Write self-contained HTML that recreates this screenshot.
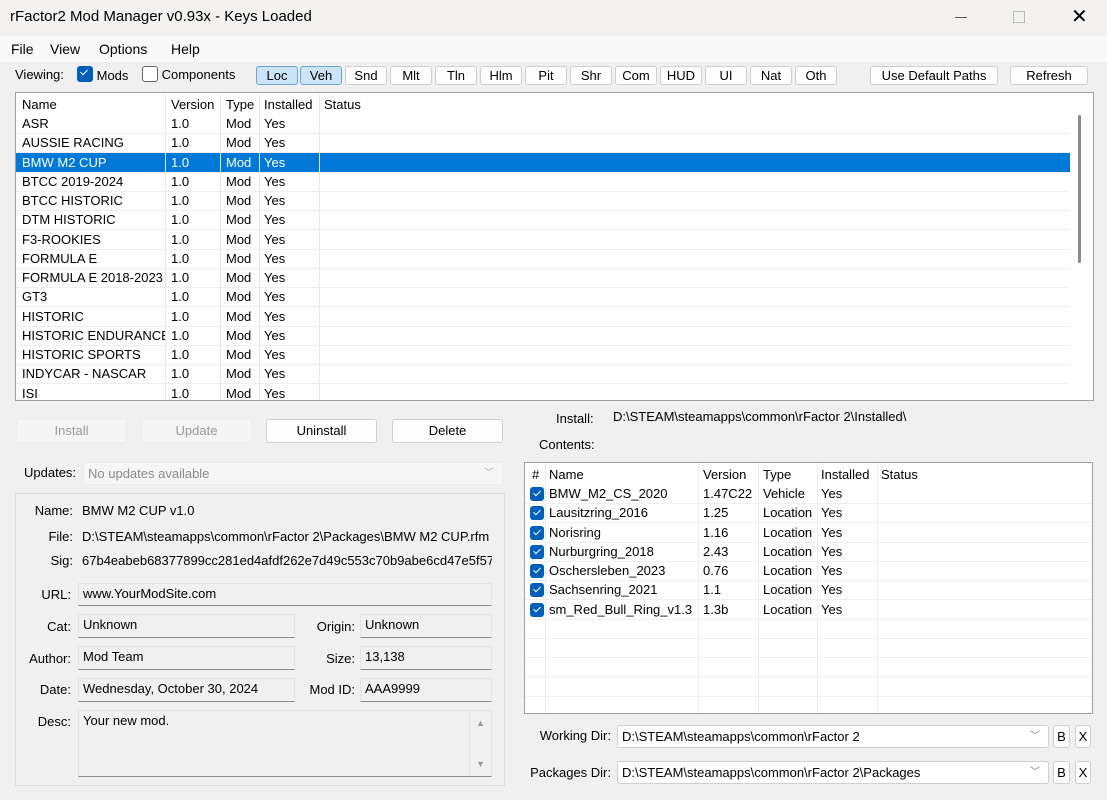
<!DOCTYPE html>
<html><head><meta charset="utf-8"><style>
*{box-sizing:border-box;margin:0;padding:0}
body{width:1107px;height:800px;overflow:hidden;background:#f0f0f0;font-family:"Liberation Sans",sans-serif;font-size:13px;color:#000;position:relative}
.a{position:absolute;white-space:nowrap}
.btn{position:absolute;background:#fdfdfd;border:1px solid #d0d0d0;border-radius:3px;text-align:center;line-height:18px;font-size:13px}
.on{background:#cce4f7;border-color:#6fa4d6}
.dis{background:#f5f5f5;border-color:#ececec;color:#9a9a9a}
.fld{position:absolute;background:#f0f0f0;border:1px solid #e3e3e3;border-bottom:1px solid #8a8a8a;padding-left:4px;line-height:20px}
.lbl{position:absolute;text-align:right;white-space:nowrap}
.chk{display:inline-block;width:14px;height:14px;background:#005fb8;border-radius:3px;position:relative;vertical-align:-2px}
.chk:after{content:"";position:absolute;left:5px;top:2px;width:3px;height:6px;border:solid #fff;border-width:0 1px 1px 0;transform:rotate(45deg)}
</style></head><body>
<div class="a" style="left:0;top:0;width:1107px;height:36px;background:#f3f2f1"></div>
<div class="a" style="left:10px;top:8px;font-size:15px">rFactor2 Mod Manager v0.93x - Keys Loaded</div>
<div class="a" style="left:955px;top:17px;width:12px;height:1px;background:#555"></div>
<div class="a" style="left:1013px;top:11px;width:12px;height:12px;border:1px solid #bbb"></div>
<div class="a" style="left:1071px;top:4px;font-size:20px;font-weight:300">✕</div>
<div class="a" style="left:0;top:36px;width:1107px;height:26px;background:#f9f9f9"></div>
<div class="a" style="left:11px;top:41px;font-size:14px">File</div>
<div class="a" style="left:50px;top:41px;font-size:14px">View</div>
<div class="a" style="left:99px;top:41px;font-size:14px">Options</div>
<div class="a" style="left:171px;top:41px;font-size:14px">Help</div>

<div class="a" style="left:15px;top:67px">Viewing:</div>
<div class="a" style="left:77px;top:66px"><span class="chk" style="width:16px;height:16px"></span> Mods</div>
<div class="a" style="left:142px;top:66px"><span style="display:inline-block;width:16px;height:16px;border:1px solid #666;border-radius:3px;background:#fff;vertical-align:-3px"></span> Components</div>
<div class="btn on" style="left:256px;top:66px;width:42px;height:19px">Loc</div>
<div class="btn on" style="left:300px;top:66px;width:42px;height:19px">Veh</div>
<div class="btn" style="left:345px;top:66px;width:42px;height:19px">Snd</div>
<div class="btn" style="left:390px;top:66px;width:42px;height:19px">Mlt</div>
<div class="btn" style="left:435px;top:66px;width:42px;height:19px">Tln</div>
<div class="btn" style="left:480px;top:66px;width:42px;height:19px">Hlm</div>
<div class="btn" style="left:525px;top:66px;width:42px;height:19px">Pit</div>
<div class="btn" style="left:570px;top:66px;width:42px;height:19px">Shr</div>
<div class="btn" style="left:615px;top:66px;width:42px;height:19px">Com</div>
<div class="btn" style="left:660px;top:66px;width:42px;height:19px">HUD</div>
<div class="btn" style="left:705px;top:66px;width:42px;height:19px">UI</div>
<div class="btn" style="left:750px;top:66px;width:42px;height:19px">Nat</div>
<div class="btn" style="left:795px;top:66px;width:42px;height:19px">Oth</div>
<div class="btn" style="left:870px;top:66px;width:128px;height:19px">Use Default Paths</div>
<div class="btn" style="left:1010px;top:66px;width:78px;height:19px">Refresh</div>

<div class="a" style="left:15px;top:92px;width:1079px;height:309px;background:#fff;border:1px solid #a0a0a0;overflow:hidden">
<div class="a" style="left:1062px;top:22px;width:3px;height:148px;background:#8a8a8a;border-radius:2px"></div>
<div class="a" style="left:0;top:60px;width:1054px;height:19px;background:#0078d7"></div>
<div id="ml"></div>
</div>

<div class="btn dis" style="left:16px;top:419px;width:111px;height:24px;line-height:22px">Install</div>
<div class="btn dis" style="left:141px;top:419px;width:111px;height:24px;line-height:22px">Update</div>
<div class="btn" style="left:266px;top:419px;width:111px;height:24px;line-height:22px">Uninstall</div>
<div class="btn" style="left:392px;top:419px;width:111px;height:24px;line-height:22px">Delete</div>
<div class="a" style="left:24px;top:465px">Updates:</div>
<div class="a" style="left:83px;top:462px;width:420px;height:23px;background:#f6f6f6;border:1px solid #ececec;color:#8a8a8a;padding-left:4px;line-height:21px">No updates available<span style="position:absolute;right:8px;top:0;font-size:10px;color:#aaa">﹀</span></div>

<div class="a" style="left:15px;top:493px;width:490px;height:293px;border:1px solid #dcdcdc"></div>
<div class="lbl" style="right:1034px;top:503px">Name:</div><div class="a" style="left:82px;top:503px">BMW M2 CUP v1.0</div>
<div class="lbl" style="right:1034px;top:529px">File:</div><div class="a" style="left:82px;top:529px">D:\STEAM\steamapps\common\rFactor 2\Packages\BMW M2 CUP.rfm</div>
<div class="lbl" style="right:1034px;top:553px">Sig:</div><div class="a" style="left:82px;top:553px;width:410px;overflow:hidden">67b4eabeb68377899cc281ed4afdf262e7d49c553c70b9abe6cd47e5f57</div>
<div class="lbl" style="right:1036px;top:587px">URL:</div><div class="fld" style="left:78px;top:583px;width:414px;height:23px">www.YourModSite.com</div>
<div class="lbl" style="right:1036px;top:619px">Cat:</div><div class="fld" style="left:78px;top:614px;width:217px;height:24px">Unknown</div>
<div class="lbl" style="right:1036px;top:651px">Author:</div><div class="fld" style="left:78px;top:646px;width:217px;height:24px">Mod Team</div>
<div class="lbl" style="right:1036px;top:682px">Date:</div><div class="fld" style="left:78px;top:678px;width:217px;height:24px">Wednesday, October 30, 2024</div>
<div class="lbl" style="right:752px;top:619px">Origin:</div><div class="fld" style="left:360px;top:614px;width:132px;height:24px">Unknown</div>
<div class="lbl" style="right:752px;top:651px">Size:</div><div class="fld" style="left:360px;top:646px;width:132px;height:24px">13,138</div>
<div class="lbl" style="right:752px;top:682px">Mod ID:</div><div class="fld" style="left:360px;top:678px;width:132px;height:24px">AAA9999</div>
<div class="lbl" style="right:1036px;top:714px">Desc:</div><div class="fld" style="left:78px;top:710px;width:414px;height:67px">Your new mod.
<span style="position:absolute;right:0;top:0;width:22px;height:65px;border-left:1px solid #e6e6e6"></span>
<span style="position:absolute;right:6px;top:2px;font-size:9px;color:#999">▲</span>
<span style="position:absolute;right:6px;top:43px;font-size:9px;color:#999">▼</span></div>

<div class="a" style="left:556px;top:411px">Install:</div>
<div class="a" style="left:613px;top:409px">D:\STEAM\steamapps\common\rFactor 2\Installed\</div>
<div class="a" style="left:539px;top:437px">Contents:</div>

<div class="a" style="left:524px;top:462px;width:569px;height:252px;background:#fff;border:1px solid #a0a0a0;overflow:hidden"><div id="cl"></div></div>

<div class="lbl" style="right:496px;top:728px">Working Dir:</div>
<div class="a" style="left:617px;top:725px;width:432px;height:23px;background:#fff;border:1px solid #d0d0d0;border-radius:3px;padding-left:4px;line-height:21px">D:\STEAM\steamapps\common\rFactor 2<span style="position:absolute;right:8px;top:0;font-size:10px;color:#777">﹀</span></div>
<div class="btn" style="left:1053px;top:725px;width:17px;height:23px;line-height:21px">B</div>
<div class="btn" style="left:1075px;top:725px;width:16px;height:23px;line-height:21px">X</div>
<div class="lbl" style="right:496px;top:765px">Packages Dir:</div>
<div class="a" style="left:617px;top:761px;width:432px;height:23px;background:#fff;border:1px solid #d0d0d0;border-radius:3px;padding-left:4px;line-height:21px">D:\STEAM\steamapps\common\rFactor 2\Packages<span style="position:absolute;right:8px;top:0;font-size:10px;color:#777">﹀</span></div>
<div class="btn" style="left:1053px;top:761px;width:17px;height:23px;line-height:21px">B</div>
<div class="btn" style="left:1075px;top:761px;width:16px;height:23px;line-height:21px">X</div>

<script>
var mods=["ASR","AUSSIE RACING","BMW M2 CUP","BTCC 2019-2024","BTCC HISTORIC","DTM HISTORIC","F3-ROOKIES","FORMULA E","FORMULA E 2018-2023","GT3","HISTORIC","HISTORIC ENDURANCE","HISTORIC SPORTS","INDYCAR - NASCAR","ISI"];
var h="",rh=19.25;
[0,150,205,244,304].forEach(function(x,i){if(i)h+='<div class="a" style="left:'+(x-1)+'px;top:0;width:1px;height:310px;background:#e8e8e8"></div>';});
h+='<div class="a" style="left:6px;top:4px">Name</div><div class="a" style="left:155px;top:4px">Version</div><div class="a" style="left:210px;top:4px">Type</div><div class="a" style="left:248px;top:4px">Installed</div><div class="a" style="left:308px;top:4px">Status</div>';
mods.forEach(function(m,i){var y=22+i*rh;var c=i==2?"color:#fff;":"";
h+='<div class="a" style="left:0;top:'+(y+18)+'px;width:1054px;height:1px;background:#efefef"></div>';
h+='<div class="a" style="'+c+'left:6px;top:'+(y+1)+'px;width:143px;overflow:hidden">'+m+'</div><div class="a" style="'+c+'left:155px;top:'+(y+1)+'px">1.0</div><div class="a" style="'+c+'left:210px;top:'+(y+1)+'px">Mod</div><div class="a" style="'+c+'left:248px;top:'+(y+1)+'px">Yes</div>';});
document.getElementById("ml").innerHTML=h;
var cs=[["BMW_M2_CS_2020","1.47C22","Vehicle"],["Lausitzring_2016","1.25","Location"],["Norisring","1.16","Location"],["Nurburgring_2018","2.43","Location"],["Oschersleben_2023","0.76","Location"],["Sachsenring_2021","1.1","Location"],["sm_Red_Bull_Ring_v1.3","1.3b","Location"]];
h="";
[20,173,233,292,352].forEach(function(x){h+='<div class="a" style="left:'+x+'px;top:0;width:1px;height:260px;background:#ececec"></div>';});
h+='<div class="a" style="left:7px;top:4px">#</div><div class="a" style="left:24px;top:4px">Name</div><div class="a" style="left:178px;top:4px">Version</div><div class="a" style="left:238px;top:4px">Type</div><div class="a" style="left:296px;top:4px">Installed</div><div class="a" style="left:356px;top:4px">Status</div>';
for(var i=0;i<12;i++){var y=22+i*rh;h+='<div class="a" style="left:0;top:'+(y+18)+'px;width:569px;height:1px;background:#efefef"></div>';
if(i<7){var r=cs[i];h+='<div class="a" style="left:5px;top:'+(y+2)+'px"><span class="chk"></span></div><div class="a" style="left:24px;top:'+(y+1)+'px">'+r[0]+'</div><div class="a" style="left:178px;top:'+(y+1)+'px">'+r[1]+'</div><div class="a" style="left:238px;top:'+(y+1)+'px">'+r[2]+'</div><div class="a" style="left:296px;top:'+(y+1)+'px">Yes</div>';}}
document.getElementById("cl").innerHTML=h;
</script>
</body></html>
